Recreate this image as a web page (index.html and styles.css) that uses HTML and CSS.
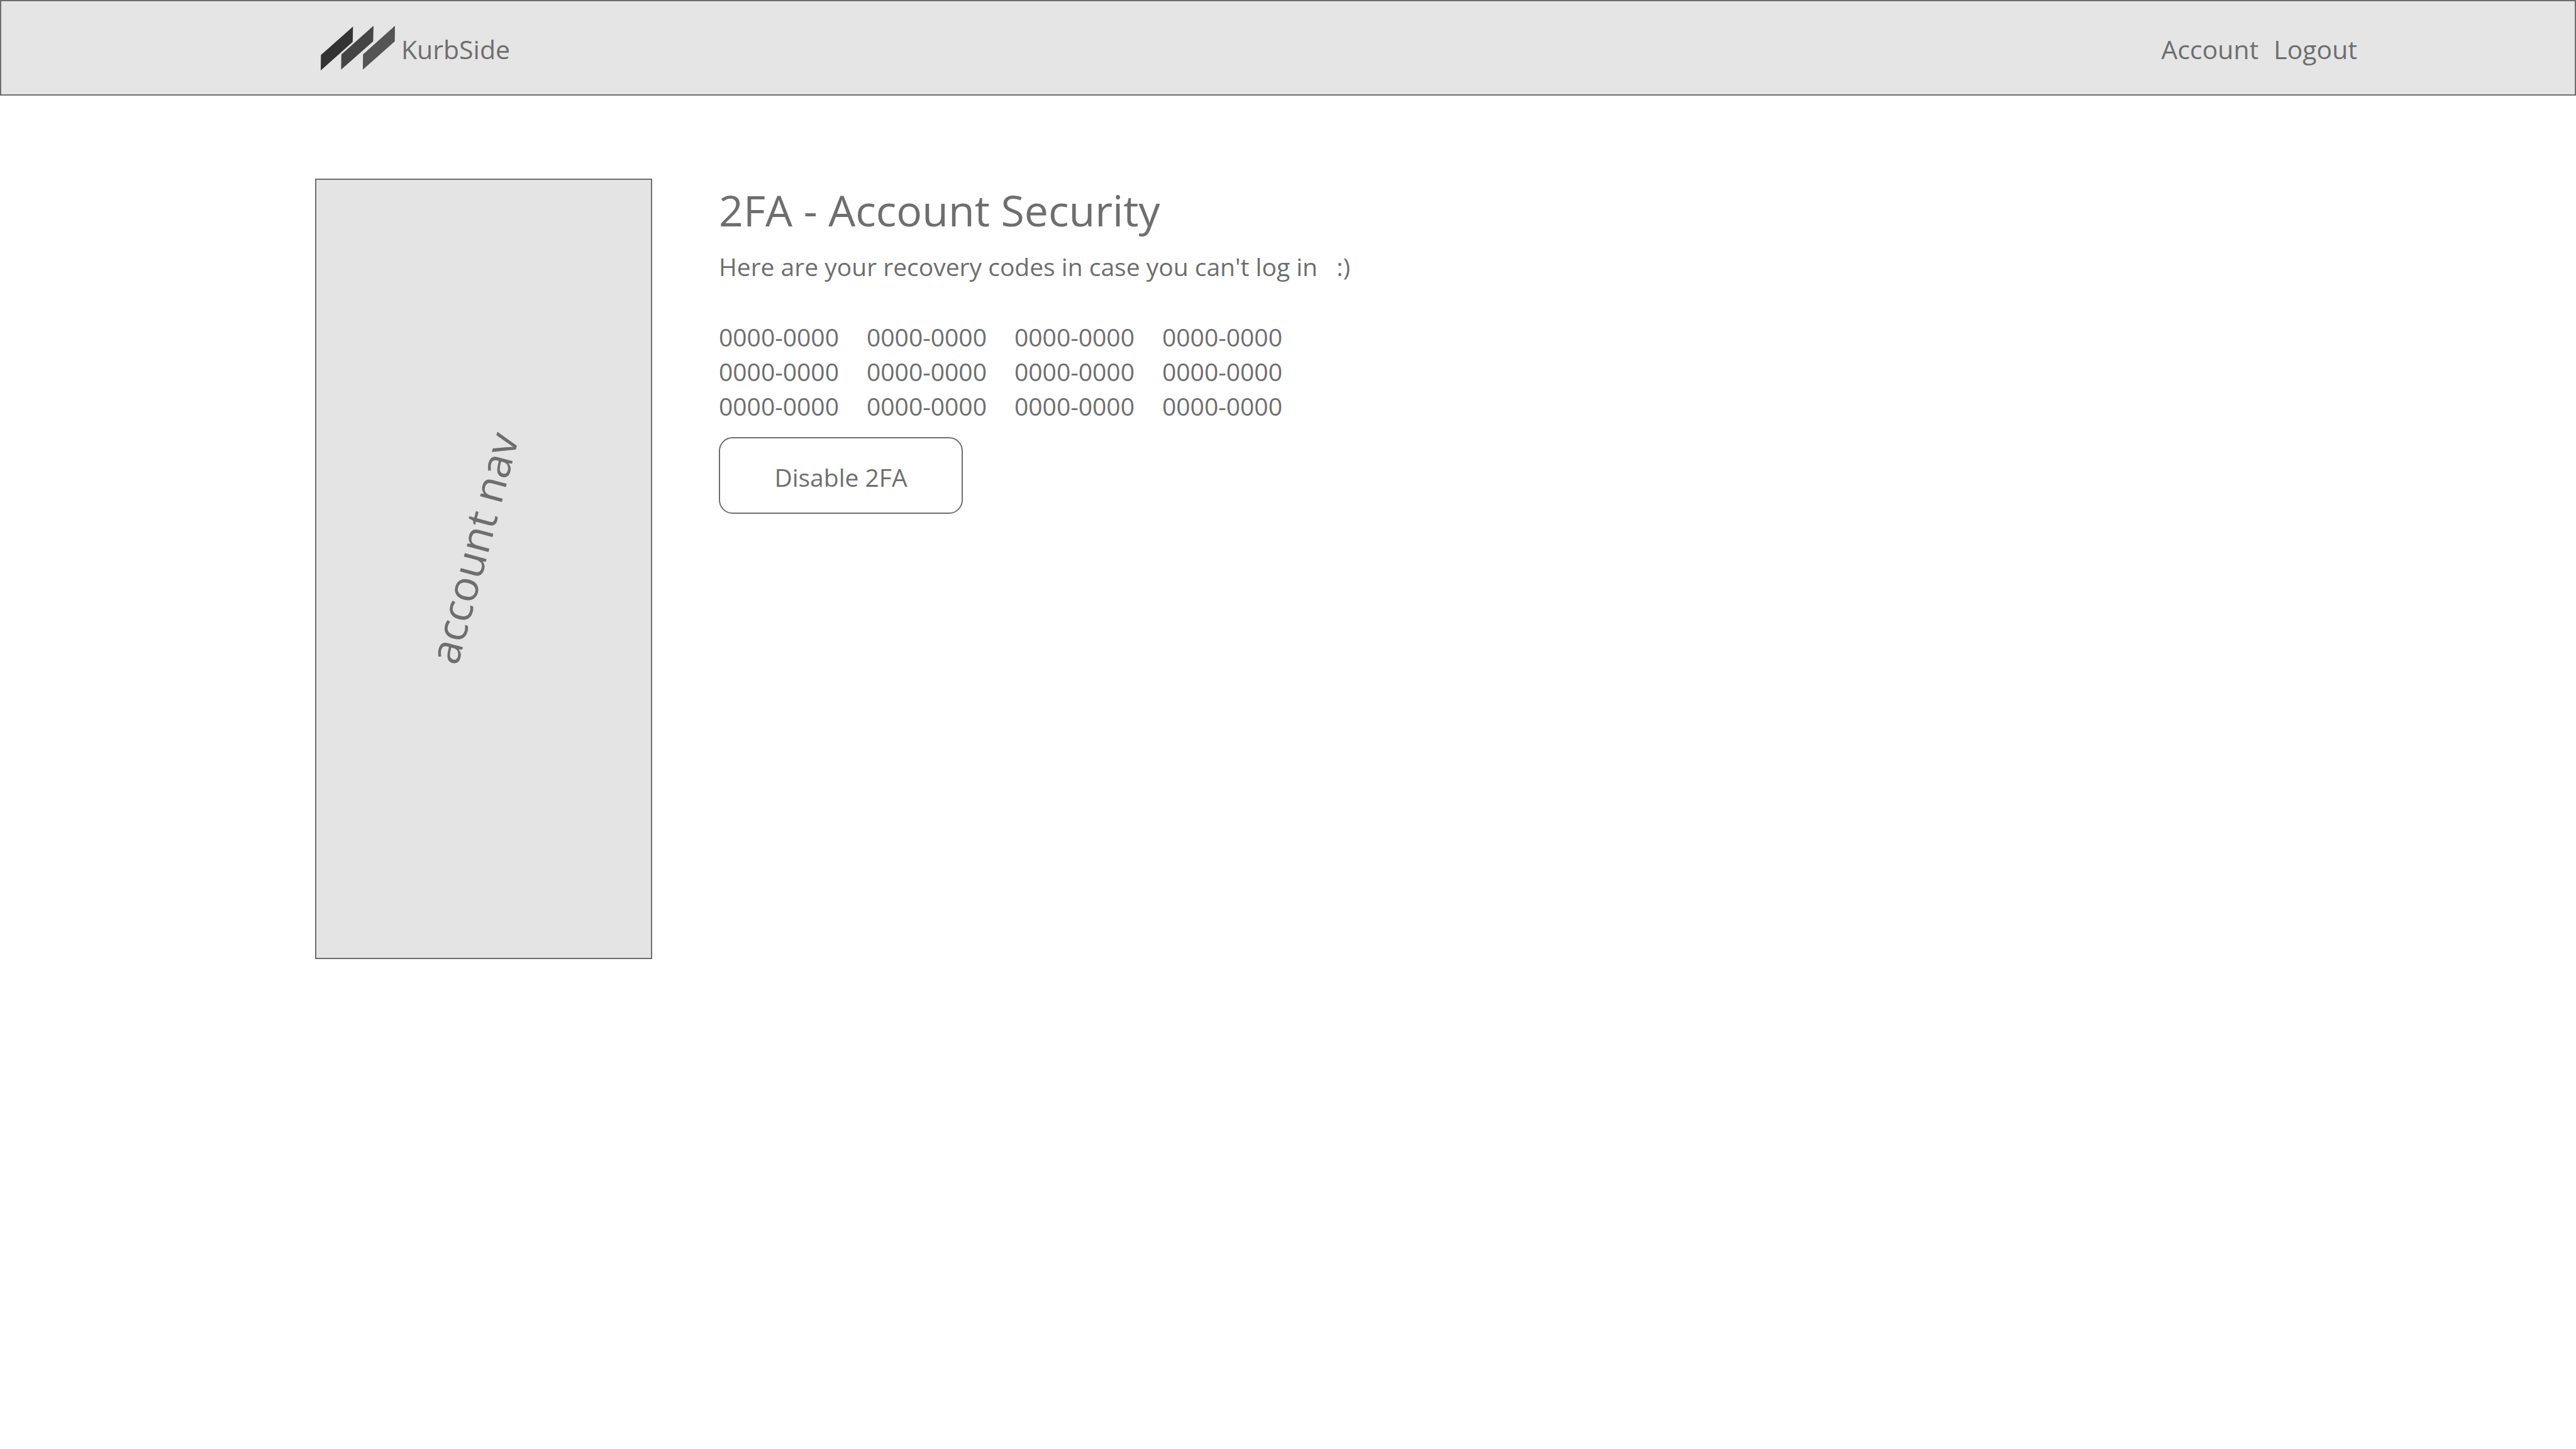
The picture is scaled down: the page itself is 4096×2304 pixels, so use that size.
FILE: index.html
```html
<!DOCTYPE html>
<html lang="en">
<head>
<meta charset="utf-8">
<title>KurbSide - Account Security</title>
<link rel="stylesheet" href="styles.css">
</head>
<body>
<header class="site-header">
  <a class="brand" href="#">
    <svg class="brand-logo" viewBox="0 0 460 276" aria-hidden="true">
      <path fill="#333333" d="M1 181 200 4 198 100 0 276Z"/>
      <path fill="#454545" d="M128 177 327 0 325 96 126 272Z"/>
      <path fill="#545454" d="M262 177 460 0 459 96 261 272Z"/>
    </svg>
    <span class="brand-name">KurbSide</span>
  </a>
  <nav class="site-nav">
    <a href="#">Account</a>
    <a href="#">Logout</a>
  </nav>
</header>
<main class="page">
  <aside class="account-nav"><span class="account-nav-label">account nav</span></aside>
  <section class="security">
    <h1 class="title">2FA - Account Security</h1>
    <p class="intro">Here are your recovery codes in case you can't log in&nbsp;&nbsp; :)</p>
    <ul class="codes">
      <li>0000-0000</li><li>0000-0000</li><li>0000-0000</li><li>0000-0000</li>
      <li>0000-0000</li><li>0000-0000</li><li>0000-0000</li><li>0000-0000</li>
      <li>0000-0000</li><li>0000-0000</li><li>0000-0000</li><li>0000-0000</li>
    </ul>
    <button class="disable" type="button">Disable 2FA</button>
  </section>
</main>
</body>
</html>
```
FILE: styles.css
```css
* {
  box-sizing: border-box;
}

body {
  margin: 0;
  background: #ffffff;
  color: #6e6e6e;
  font-family: "Open Sans", "Noto Sans", sans-serif;
  font-size: 39px;
}

a {
  color: inherit;
  text-decoration: none;
}

.site-header {
  display: flex;
  align-items: center;
  justify-content: space-between;
  height: 152px;
  padding: 0 346px 0 508px;
  border: 2px solid #6e6e6e;
  background: #e5e5e5;
  font-size: 41px;
}

.brand {
  display: flex;
  align-items: center;
  gap: 10px;
}

.brand-logo {
  width: 118px;
  height: 71px;
}

.brand-name,
.site-nav {
  padding-top: 4px;
}

.site-nav {
  display: flex;
  gap: 24px;
}

.page {
  display: grid;
  grid-template-columns: 536px 1fr;
  align-items: start;
  gap: 106px;
  padding: 132px 348px 132px 501px;
}

.account-nav {
  display: flex;
  align-items: center;
  justify-content: center;
  height: 1241px;
  padding: 0 36px 68px 0;
  border: 2px solid #6e6e6e;
  background: #e4e4e4;
  font-size: 67px;
}

.account-nav-label {
  transform: rotate(-75deg);
  white-space: nowrap;
}

.title {
  margin: 0;
  font-size: 68px;
  font-weight: 400;
  line-height: 100px;
}

.intro {
  margin: 12px 0 0;
  line-height: 56px;
}

.codes {
  display: grid;
  grid-template-columns: repeat(4, 235px);
  margin: 56px 0 22px;
  padding: 0;
  list-style: none;
  line-height: 55px;
}

.disable {
  display: block;
  width: 388px;
  height: 122px;
  padding: 4px 0 0;
  border: 2px solid #6e6e6e;
  border-radius: 22px;
  background: #ffffff;
  color: inherit;
  font: inherit;
}
```
